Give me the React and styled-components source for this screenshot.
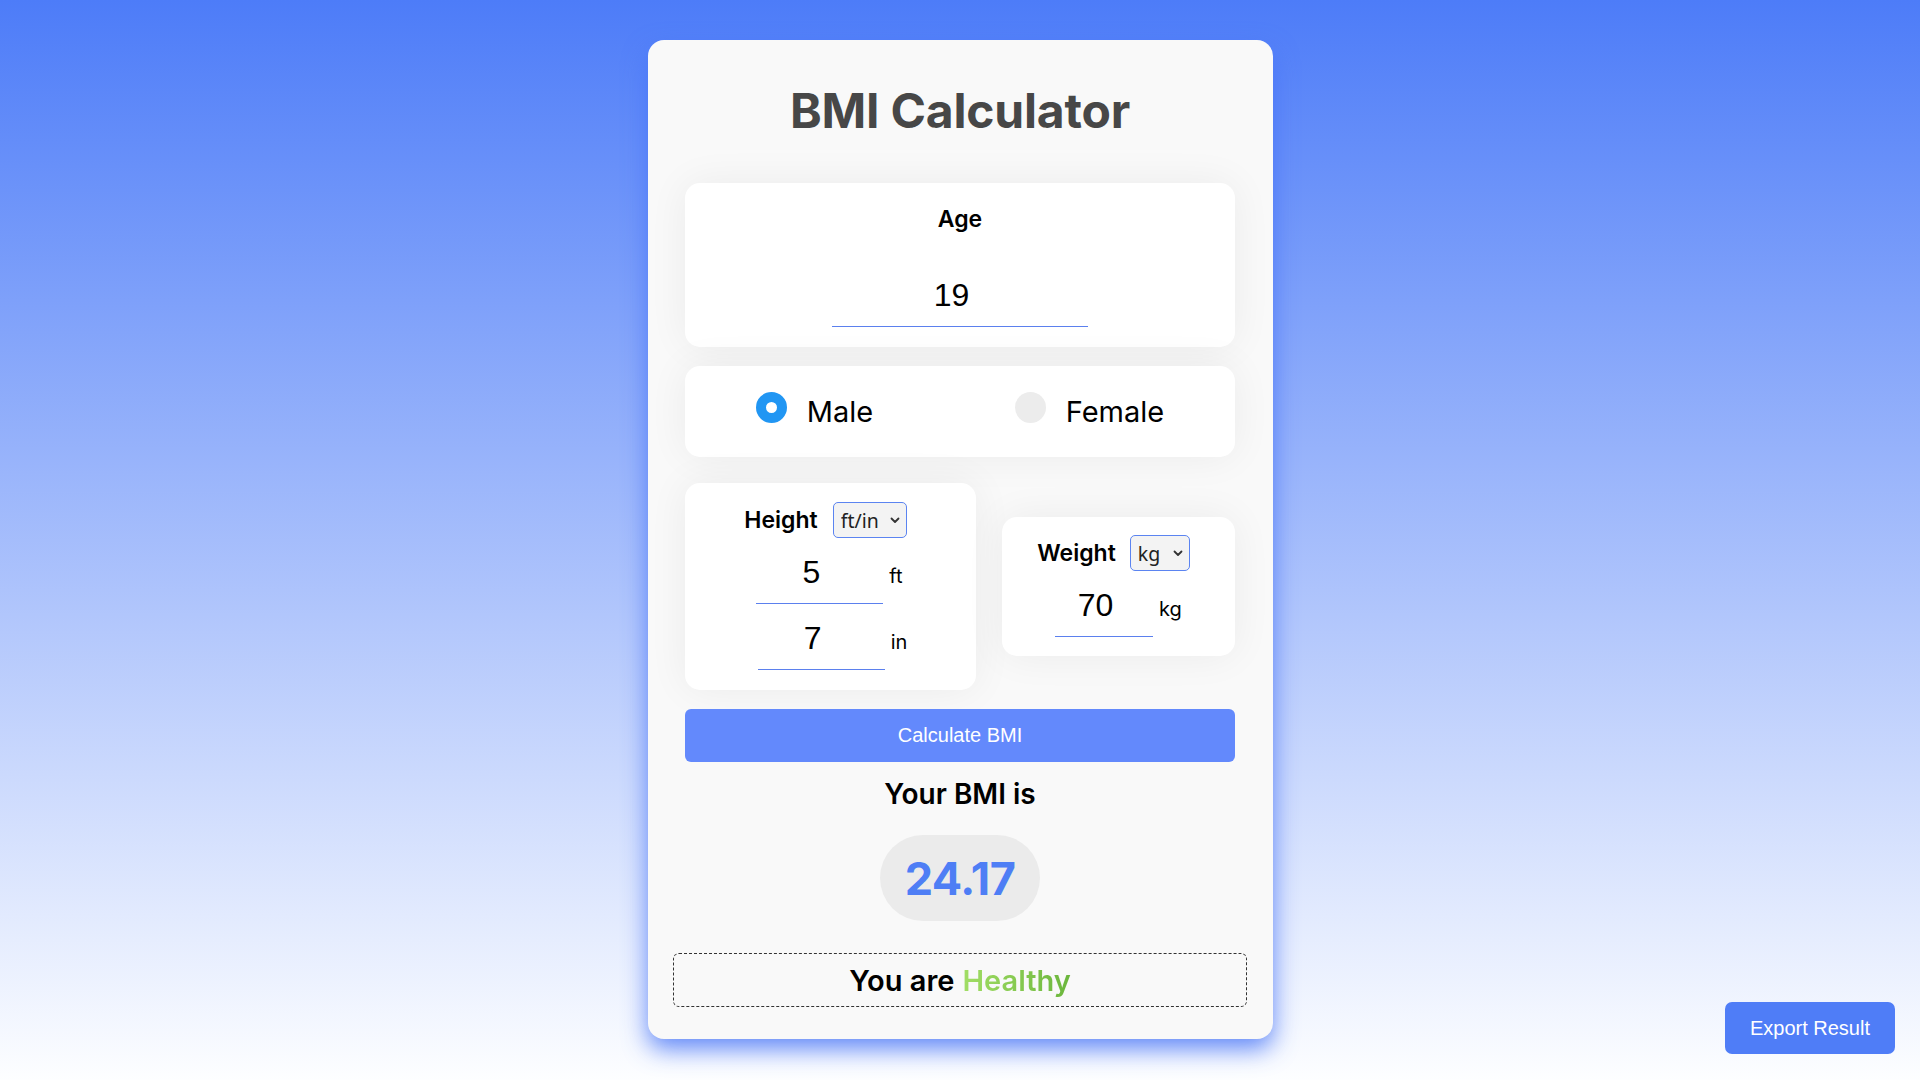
import React, { useState } from "react";
import styled, { createGlobalStyle } from "styled-components";

const GlobalStyle = createGlobalStyle`
  html, body {
    margin: 0;
    padding: 0;
    min-height: 100vh;
  }
  body {
    background: linear-gradient(180deg, #4d7cf8 0%, #fdfeff 100%);
    font-family: "Inter", "Liberation Sans", sans-serif;
  }
  * {
    box-sizing: border-box;
  }
`;

const Page = styled.div`
  display: flex;
  justify-content: center;
  padding: 40px 0 42px;
`;

const Card = styled.div`
  width: 625px;
  padding: 41px 37.5px 32px;
  background-color: #f9f9f9;
  border-radius: 16px;
  box-shadow: 0 10px 24px rgba(72, 116, 247, 0.85);
  display: flex;
  flex-direction: column;
  align-items: center;
`;

const Title = styled.h1`
  margin: 0 0 42px;
  font-family: "Inter", sans-serif;
  font-size: 48px;
  font-weight: 700;
  line-height: 60px;
  letter-spacing: -0.2px;
  color: #474747;
`;

const Box = styled.div`
  background-color: #fff;
  border-radius: 15px;
  box-shadow: 0 0 40px rgba(0, 0, 0, 0.06);
  display: flex;
  flex-direction: column;
  align-items: center;
`;

const AgeBox = styled(Box)`
  width: 100%;
  padding: 20px 0;
`;

const Label = styled.label`
  font-family: "Inter", sans-serif;
  font-size: 23px;
  font-weight: 600;
  line-height: 33px;
  color: #000;
`;

const NumberInput = styled.input`
  width: ${(p) => p.$w}px;
  margin-top: ${(p) => p.$mt || 0}px;
  padding: 4px 17px 12px 0;
  border: none;
  border-bottom: 1px solid #5b80ee;
  background: transparent;
  outline: none;
  text-align: center;
  font-family: "Liberation Sans", Arial, sans-serif;
  font-size: 32px;
  line-height: 37px;
  color: #000;
`;

const GenderBox = styled(Box)`
  width: 100%;
  height: 91px;
  margin-top: 19px;
  flex-direction: row;
  justify-content: space-around;
`;

const RadioLabel = styled.label`
  display: flex;
  align-items: center;
  gap: 20px;
  font-family: "Inter", sans-serif;
  font-size: 29px;
  font-weight: 400;
  color: #000;
  cursor: pointer;
`;

const RadioDot = styled.span`
  width: 31px;
  height: 31px;
  border-radius: 50%;
  margin-bottom: 8px;
  background-color: ${(p) => (p.$on ? "#fff" : "#ececec")};
  border: ${(p) => (p.$on ? "10px solid #2196f3" : "none")};
`;

const MeasureRow = styled.div`
  width: 100%;
  margin-top: 26px;
  display: flex;
  justify-content: space-between;
  align-items: center;
`;

const HeightBox = styled(Box)`
  width: 291px;
  padding: 19px 0 20px;
`;

const WeightBox = styled(Box)`
  width: 233px;
  padding: 18px 0 19px;
`;

const LabelRow = styled.div`
  display: flex;
  align-items: center;
  gap: ${(p) => p.$gap}px;
  margin-bottom: 12px;
  margin-left: ${(p) => p.$ml || 0}px;
`;

const SelectWrap = styled.div`
  display: flex;
  align-items: center;
  height: 36px;
  padding: 0 5px 0 ${(p) => p.$pl}px;
  border: 1px solid #5b84f1;
  border-radius: 5px;
  background-color: #f3f3f3;
  gap: ${(p) => p.$gap}px;
`;

const Select = styled.select`
  appearance: none;
  border: none;
  background: transparent;
  outline: none;
  padding: 0;
  font-family: "Noto Sans", "Open Sans", sans-serif;
  font-size: 19.5px;
  color: #222;
  cursor: pointer;
`;

const Chevron = styled.svg`
  width: 12px;
  height: 12px;
  pointer-events: none;
`;

const InputRow = styled.div`
  display: flex;
  align-items: baseline;
  gap: 6px;
  margin-top: ${(p) => p.$mt || 0}px;
  margin-left: ${(p) => p.$ml || 0}px;
`;

const Unit = styled.span`
  font-family: "Inter", sans-serif;
  font-size: ${(p) => p.$size || 20}px;
  color: #000;
`;

const CalcButton = styled.button`
  width: 100%;
  height: 53px;
  margin-top: 19px;
  border: none;
  border-radius: 6px;
  background-color: #6389fc;
  color: #fff;
  font-family: "Liberation Sans", Arial, sans-serif;
  font-size: 20px;
  cursor: pointer;
`;

const ResultHeading = styled.h3`
  margin: 11px 0 0;
  font-family: "Inter", sans-serif;
  font-size: 28px;
  font-weight: 600;
  line-height: 42px;
  color: #000;
`;

const BmiPill = styled.div`
  display: inline-flex;
  align-items: center;
  justify-content: center;
  height: 86px;
  margin-top: 20px;
  padding: 0 25px;
  border-radius: 43px;
  background-color: #ebebeb;
  font-family: "Inter", sans-serif;
  font-size: 45px;
  font-weight: 700;
  color: #4e7ef5;
  letter-spacing: -0.5px;
`;

const Verdict = styled.div`
  align-self: stretch;
  margin: 32px -12px 0;
  height: 54px;
  border: 1px dashed #333;
  border-radius: 6px;
  display: flex;
  align-items: center;
  justify-content: center;
  gap: 8px;
  font-family: "Inter", sans-serif;
  font-size: 29px;
  font-weight: 600;
  color: #000;
`;

const Healthy = styled.span`
  background: linear-gradient(90deg, #a2de66 0%, #6bb63c 100%);
  -webkit-background-clip: text;
  background-clip: text;
  color: transparent;
`;

const ExportButton = styled.button`
  position: fixed;
  right: 25px;
  bottom: 26px;
  height: 52px;
  padding: 0 25px;
  border: none;
  border-radius: 7px;
  background-color: #4f7df7;
  color: #fff;
  font-family: "Liberation Sans", Arial, sans-serif;
  font-size: 20px;
  cursor: pointer;
`;

function ChevronIcon() {
  return (
    <Chevron viewBox="0 0 12 12">
      <path d="M2.5 4.5 L6 8 L9.5 4.5" fill="none" stroke="#333" strokeWidth="1.8" strokeLinecap="round" strokeLinejoin="round" />
    </Chevron>
  );
}

export default function App() {
  const [gender, setGender] = useState("male");
  const [age, setAge] = useState("19");
  const [ft, setFt] = useState("5");
  const [inch, setInch] = useState("7");
  const [kg, setKg] = useState("70");

  return (
    <>
      <GlobalStyle />
      <Page>
        <Card>
          <Title>BMI Calculator</Title>

          <AgeBox>
            <Label>Age</Label>
            <NumberInput $w={256} $mt={37} value={age} onChange={(e) => setAge(e.target.value)} />
          </AgeBox>

          <GenderBox>
            <RadioLabel onClick={() => setGender("male")}>
              <RadioDot $on={gender === "male"} />
              Male
            </RadioLabel>
            <RadioLabel onClick={() => setGender("female")}>
              <RadioDot $on={gender === "female"} />
              Female
            </RadioLabel>
          </GenderBox>

          <MeasureRow>
            <HeightBox>
              <LabelRow $gap={15} $ml={-10}>
                <Label>Height</Label>
                <SelectWrap $pl={7} $gap={9}>
                  <Select defaultValue="ftin">
                    <option value="ftin">ft/in</option>
                    <option value="cm">cm</option>
                  </Select>
                  <ChevronIcon />
                </SelectWrap>
              </LabelRow>
              <InputRow $ml={-2}>
                <NumberInput $w={127} value={ft} onChange={(e) => setFt(e.target.value)} />
                <Unit>ft</Unit>
              </InputRow>
              <InputRow $mt={12} $ml={4}>
                <NumberInput $w={127} value={inch} onChange={(e) => setInch(e.target.value)} />
                <Unit>in</Unit>
              </InputRow>
            </HeightBox>

            <WeightBox>
              <LabelRow $gap={14} $ml={-10}>
                <Label>Weight</Label>
                <SelectWrap $pl={7} $gap={11}>
                  <Select defaultValue="kg">
                    <option value="kg">kg</option>
                    <option value="lb">lb</option>
                  </Select>
                  <ChevronIcon />
                </SelectWrap>
              </LabelRow>
              <InputRow>
                <NumberInput $w={98} value={kg} onChange={(e) => setKg(e.target.value)} />
                <Unit>kg</Unit>
              </InputRow>
            </WeightBox>
          </MeasureRow>

          <CalcButton>Calculate BMI</CalcButton>

          <ResultHeading>Your BMI is</ResultHeading>
          <BmiPill>24.17</BmiPill>

          <Verdict>
            You are <Healthy>Healthy</Healthy>
          </Verdict>
        </Card>
      </Page>
      <ExportButton>Export Result</ExportButton>
    </>
  );
}
